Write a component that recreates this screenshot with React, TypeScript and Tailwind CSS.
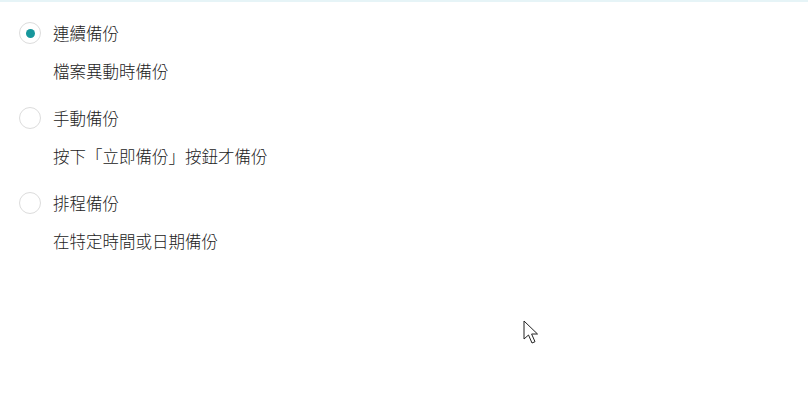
import React from "react";

const items = [
  { label: "連續備份", desc: "檔案異動時備份", checked: true },
  { label: "手動備份", desc: "按下「立即備份」按鈕才備份", checked: false },
  { label: "排程備份", desc: "在特定時間或日期備份", checked: false },
];

export default function App() {
  return (
    <div
      className="relative w-[808px] h-[400px] bg-white overflow-hidden text-[#222222]"
      style={{ fontFamily: '"Noto Sans CJK TC", "Noto Sans", sans-serif' }}
    >
      <div className="h-[2px] bg-[#e6f4f7]" />
      <div className="pl-[19px] pt-[20px] flex flex-col gap-[24px]">
        {items.map((it) => (
          <div key={it.label} className="flex flex-col gap-[15px]">
            <div className="flex items-center gap-[12px] h-[22px]">
              <div className="w-[22px] h-[22px] rounded-full border border-[#dcdcdc] bg-white flex items-center justify-center">
                {it.checked && <div className="w-[9px] h-[9px] rounded-full bg-[#17979c]" />}
              </div>
              <span className="text-[16.5px] font-light leading-[22px]">{it.label}</span>
            </div>
            <div className="pl-[34px] text-[16.5px] font-light leading-[24px]">{it.desc}</div>
          </div>
        ))}
      </div>
      <svg
        className="absolute left-[523px] top-[320px]"
        width="18"
        height="26"
        viewBox="0 0 18 26"
      >
        <path
          d="M1 1 L1 19 L5.5 15 L9 23 L12 21.7 L8.6 14 L14.5 14 Z"
          fill="white"
          stroke="#222"
          strokeWidth="1"
          strokeLinejoin="round"
        />
      </svg>
    </div>
  );
}
